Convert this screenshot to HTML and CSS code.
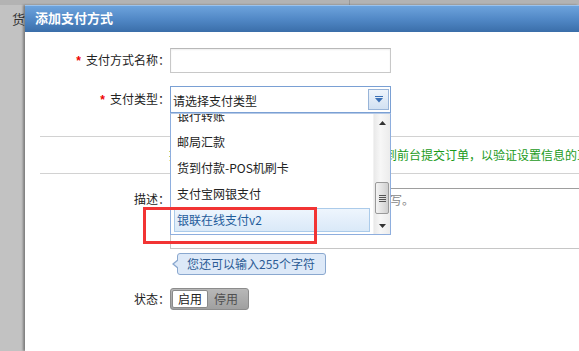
FILE: index.html
```
<!DOCTYPE html>
<html lang="zh-CN">
<head>
  <meta charset="UTF-8">
  <title>添加支付方式</title>
  <link rel="stylesheet" href="styles.css">
</head>
<body>
  <div class="page-bg">
    <div class="topstrip"><span class="sep"></span></div>
    <div class="bg-text">货</div>
  </div>

  <div class="dialog">
    <div class="dialog-title">添加支付方式</div>

    <div class="dialog-body">
      <div class="row">
        <label class="lbl"><span class="req">*</span>支付方式名称：</label>
        <input type="text" class="txt">
      </div>

      <div class="row row-type">
        <label class="lbl"><span class="req">*</span>支付类型：</label>
        <div class="select">
          <span class="select-text">请选择支付类型</span>
          <span class="select-btn">
            <svg width="8" height="7" viewBox="0 0 8 7"><rect x="0" y="0" width="8" height="1" fill="#3a6fb5"/><path d="M0 2h8L4 6.5z" fill="#3a6fb5"/></svg>
          </span>

          <div class="dropdown">
            <ul class="options">
              <li>银行转账</li>
              <li>邮局汇款</li>
              <li>货到付款-POS机刷卡</li>
              <li>支付宝网银支付</li>
              <li class="active">银联在线支付v2</li>
            </ul>
            <div class="scrollbar">
              <span class="sb-arrow">
                <svg width="7" height="4" viewBox="0 0 7 4"><path d="M0 4h7L3.5 0z" fill="#333"/></svg>
              </span>
              <span class="sb-track"><span class="sb-thumb"><i></i><i></i><i></i><i></i></span></span>
              <span class="sb-arrow">
                <svg width="7" height="4" viewBox="0 0 7 4"><path d="M0 0h7L3.5 4z" fill="#333"/></svg>
              </span>
            </div>
          </div>
        </div>
      </div>

      <div class="hint">提示：添加成功后，建议用测试会员账号到前台提交订单，以验证设置信息的正确性。</div>

      <div class="row row-desc">
        <label class="lbl">描述：</label>
        <div class="textarea">该支付方式的描述将在前台显示，可不填写。</div>
      </div>

      <div class="tip-row">
        <div class="tip">您还可以输入255个字符</div>
      </div>

      <div class="row row-status">
        <label class="lbl">状态：</label>
        <div class="toggle">
          <span class="on">启用</span>
          <span class="off">停用</span>
        </div>
      </div>
    </div>

    <div class="mark"></div>
  </div>
</body>
</html>
```

FILE: styles.css
```
body {
  margin: 0;
  width: 579px;
  height: 351px;
  overflow: hidden;
  background-color: #c2c2c2;
  font-family: "Noto Sans CJK SC", "Liberation Sans", sans-serif;
  font-size: 12px;
  color: #222;
}

.page-bg {
  height: 351px;
}

.topstrip {
  height: 5px;
  background-color: #b3b3b3;
  position: relative;
}

.topstrip .sep {
  position: absolute;
  left: 349px;
  top: 0;
  width: 1px;
  height: 5px;
  background-color: #999;
}

.bg-text {
  margin: 7px 0 0 12px;
  font-size: 13px;
  line-height: 14px;
  color: #333;
}

.dialog {
  position: absolute;
  left: 25px;
  top: 5px;
  width: 554px;
  height: 346px;
  overflow: hidden;
  background-color: #fff;
  box-shadow: -2px 0 2px rgba(0, 0, 0, 0.35);
}

.dialog-title {
  height: 26px;
  border-top: 1px solid #9cc3ec;
  background: linear-gradient(#6da3dc, #4f86c4 55%, #3a6ea9);
  color: #fff;
  font-weight: bold;
  font-size: 13px;
  line-height: 23px;
  padding-left: 10px;
}

.dialog-body {
  padding-top: 16px;
}

.row {
  display: flex;
  align-items: center;
}

.lbl {
  width: 145px;
  flex-shrink: 0;
  text-align: right;
  line-height: 16px;
}

.req {
  color: #e00;
  margin-right: 5px;
  font-family: "Liberation Sans", sans-serif;
  font-weight: bold;
}

.txt {
  box-sizing: border-box;
  width: 221px;
  height: 25px;
  margin: 0;
  border: 1px solid #c8c8c8;
  border-top-color: #b8b8b8;
  box-shadow: inset 0 1px 2px #eee;
  outline: none;
}

.row-type {
  margin-top: 13px;
}

.select {
  position: relative;
  box-sizing: border-box;
  width: 221px;
  height: 27px;
  border: 1px solid #7aa0d4;
  display: flex;
  align-items: center;
  justify-content: space-between;
  padding: 0 1px 0 2px;
}

.select-text {
  font-size: 12px;
  line-height: 16px;
  padding-top: 3px;
}

.select-btn {
  box-sizing: border-box;
  width: 21px;
  height: 21px;
  border: 1px solid #98b4d8;
  background: linear-gradient(#eef4fb, #d2e1f2);
  display: flex;
  align-items: center;
  justify-content: center;
}

.dropdown {
  position: absolute;
  left: -1px;
  top: 26px;
  box-sizing: border-box;
  width: 221px;
  height: 122px;
  border: 1px solid #8eaede;
  border-top-color: #b5c9e6;
  background-color: #fff;
  display: flex;
  overflow: hidden;
  z-index: 2;
}

.options {
  list-style: none;
  margin: -10px 0 0 0;
  padding: 0;
  flex: 1;
}

.options li {
  box-sizing: border-box;
  height: 24px;
  margin: 0 3px 2px 3px;
  padding-left: 2px;
  border: 1px solid transparent;
  line-height: 22px;
  white-space: nowrap;
}

.options li.active {
  border-color: #abcbea;
  background: linear-gradient(#eef5fd, #dae9f8);
  color: #1f5c9b;
}

.scrollbar {
  width: 16px;
  display: flex;
  flex-direction: column;
  background: linear-gradient(90deg, #e9e9e9, #f7f7f7 40%, #ececec);
  border-left: 1px solid #f2f2f2;
}

.sb-arrow {
  height: 17px;
  display: flex;
  align-items: center;
  justify-content: center;
}

.sb-track {
  flex: 1;
  display: flex;
  flex-direction: column;
  justify-content: flex-end;
  padding-bottom: 3px;
}

.sb-thumb {
  box-sizing: border-box;
  height: 32px;
  margin: 0 1px;
  border: 1px solid #9a9a9a;
  border-radius: 2px;
  background: linear-gradient(90deg, #f3f3f3, #e2e2e2 50%, #cfcfcf);
  display: flex;
  flex-direction: column;
  align-items: center;
  justify-content: center;
  gap: 1px;
}

.sb-thumb i {
  display: block;
  width: 7px;
  height: 1px;
  background-color: #555;
}

.hint {
  margin: 23px 0 0 15px;
  height: 36px;
  border-top: 1px solid #d2d2d2;
  border-bottom: 1px solid #d2d2d2;
  padding-left: 129px;
  color: #1a9a1a;
  line-height: 36px;
  white-space: nowrap;
  overflow: hidden;
}

.row-desc {
  margin-top: 14px;
  align-items: flex-start;
}

.row-desc .lbl {
  padding-top: 3px;
}

.textarea {
  box-sizing: border-box;
  flex: 1;
  height: 61px;
  margin-right: -4px;
  border: 1px solid #c6c6c6;
  border-top-color: #9e9e9e;
  padding: 3px 3px;
  color: #888;
  line-height: 16px;
  white-space: nowrap;
  overflow: hidden;
}

.tip-row {
  margin: 4px 0 0 147px;
  display: flex;
}

.tip {
  position: relative;
  margin-left: 5px;
  height: 20px;
  padding: 0 10px 0 9px;
  border: 1px solid #8aa8cf;
  border-radius: 3px;
  background-color: #dde9f8;
  color: #2b5b95;
  font-size: 12px;
  line-height: 20px;
}

.tip::before {
  content: "";
  position: absolute;
  left: -6px;
  top: 5px;
  border-style: solid;
  border-width: 5px 6px 5px 0;
  border-color: transparent #8aa8cf transparent transparent;
}

.tip::after {
  content: "";
  position: absolute;
  left: -4px;
  top: 6px;
  border-style: solid;
  border-width: 4px 5px 4px 0;
  border-color: transparent #dde9f8 transparent transparent;
}

.row-status {
  margin-top: 13px;
}

.toggle {
  display: flex;
  height: 22px;
  box-sizing: border-box;
  padding: 1px;
  border: 1px solid #8c8c8c;
  border-radius: 3px;
  background: linear-gradient(#b8b8b8, #a0a0a0);
}

.toggle span {
  line-height: 18px;
  padding: 0 5px;
}

.toggle .on {
  background-color: #fff;
  border: 1px solid #8a8a8a;
  border-radius: 2px;
  line-height: 16px;
}

.toggle .off {
  color: #505050;
  padding: 0 9px 0 6px;
}

.mark {
  position: absolute;
  left: 118px;
  top: 202px;
  width: 168px;
  height: 31px;
  border: 3px solid #f23434;
  z-index: 3;
}
```
